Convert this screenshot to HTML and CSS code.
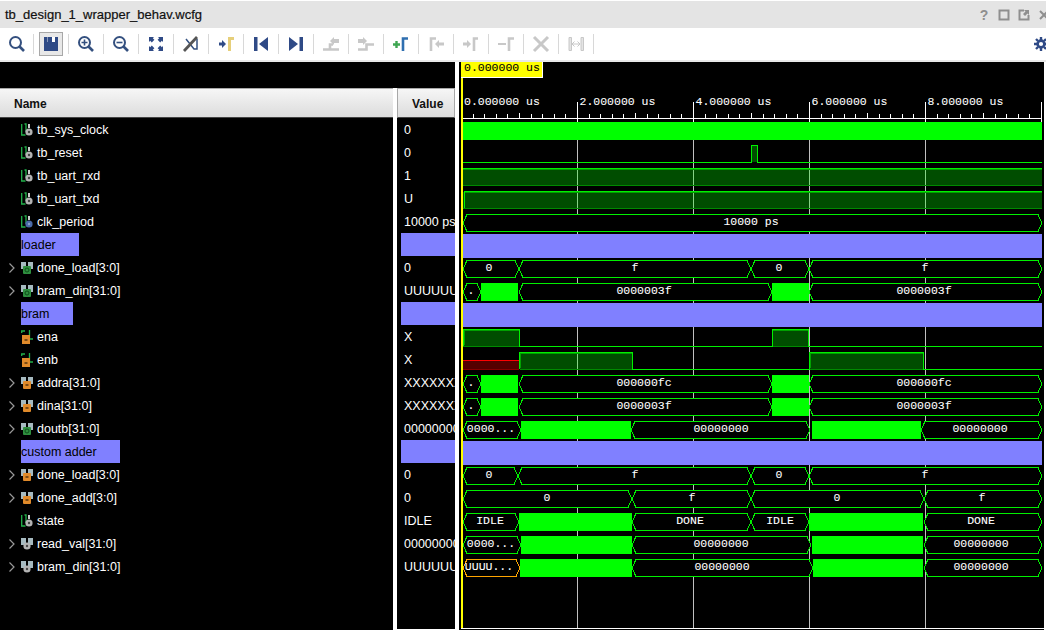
FILE: index.html
```html
<!DOCTYPE html>
<html>
<head>
  <title>tb_design_1_wrapper_behav.wcfg</title>
  <link rel="stylesheet" href="styles.css">
</head>
<body>
  <svg class="defs" width="0" height="0">
    <symbol id="sig-grey" viewBox="0 0 12 14">
      <path d="M0.7 1V12H4.5M3.5 1H5V9" fill="none" stroke="#22b04a" stroke-width="1.3"/>
      <path d="M8 1V5" stroke="#ccc" stroke-width="2"/>
      <circle cx="8" cy="9" r="3.6" fill="#b4b4b4"/>
      <circle cx="8" cy="9" r="1.2" fill="#444"/>
    </symbol>
    <symbol id="sig-blue" viewBox="0 0 12 14">
      <path d="M0.7 1V12H4.5M3.5 1H5V9" fill="none" stroke="#22b04a" stroke-width="1.3"/>
      <path d="M8 1V5" stroke="#ccc" stroke-width="2"/>
      <circle cx="8" cy="9" r="3.6" fill="#4a6aa8"/>
      <circle cx="8" cy="9" r="1.2" fill="#8aa0c8"/>
    </symbol>
    <symbol id="sig-orange" viewBox="0 0 12 14">
      <path d="M0.7 3V1H4" fill="none" stroke="#22b04a" stroke-width="1.3"/>
      <path d="M8.5 0V9H12" fill="none" stroke="#22b04a" stroke-width="1.3"/>
      <rect x="1" y="5" width="8" height="9" fill="#e08a2a"/>
      <rect x="3.5" y="9" width="3" height="2" fill="#7a4a14"/>
    </symbol>
    <symbol id="bus-green" viewBox="0 0 12 12">
      <path d="M0 0H5V5L3 7H0zM12 0H7V5L9 7H12z" fill="#a6bac0"/>
      <rect x="2" y="4" width="8" height="8" rx="1" fill="#2f8f3f"/>
      <circle cx="6" cy="8" r="2" fill="none" stroke="#0e4f1a"/>
    </symbol>
    <symbol id="bus-orange" viewBox="0 0 12 12">
      <path d="M0 0H5V5L3 7H0zM12 0H7V5L9 7H12z" fill="#a6bac0"/>
      <rect x="2" y="4" width="8" height="8" rx="1" fill="#e08a2a"/>
      <rect x="4.5" y="7" width="3" height="2" fill="#7a4a14"/>
    </symbol>
    <symbol id="bus-grey" viewBox="0 0 12 12">
      <path d="M0 0H5V5L3 7H0zM12 0H7V5L9 7H12z" fill="#a6bac0"/>
      <circle cx="6" cy="8" r="3.6" fill="#b4b4b4"/>
      <circle cx="6" cy="8" r="1.2" fill="#444"/>
    </symbol>
    <symbol id="chev" viewBox="0 0 6 10">
      <path d="M0.5 0.5L5 5L0.5 9.5" fill="none" stroke="#999" stroke-width="1.2"/>
    </symbol>
  </svg>

  <div class="titlebar">
    <span class="title">tb_design_1_wrapper_behav.wcfg</span>
    <div class="win-btns">
      <span class="help">?</span>
      <svg class="win-ico" viewBox="0 0 12 12"><rect x="1.5" y="1.5" width="9" height="9" fill="none" stroke="#8f8f8f" stroke-width="2"/></svg>
      <svg class="win-ico" viewBox="0 0 12 12"><path d="M6 1.5H1.5V10.5H10.5V6" fill="none" stroke="#8f8f8f" stroke-width="2"/><path d="M6 1H11V6L9.5 4.5L7 7L5 5L7.5 2.5z" fill="#8f8f8f"/></svg>
      <svg class="win-ico" viewBox="0 0 12 12"><path d="M2 2L10 10M10 2L2 10" stroke="#8f8f8f" stroke-width="2"/></svg>
    </div>
  </div>

  <div class="toolbar">
    <div class="tool first"><svg viewBox="0 0 20 20"><circle cx="8.5" cy="8.5" r="5.5" fill="none" stroke="#34507f" stroke-width="2"/><path d="M12.5 12.5L17 17" stroke="#34507f" stroke-width="2.6"/></svg></div>
    <div class="tool"><div class="pressed"><svg viewBox="0 0 20 20"><path d="M3 3H17V17H3z" fill="#2f4a86"/><rect x="11" y="3" width="3" height="5" fill="#fff"/><rect x="6" y="3" width="1" height="5" fill="#8898bb"/></svg></div></div>
    <div class="tool"><svg viewBox="0 0 20 20"><circle cx="8.5" cy="8.5" r="5.5" fill="none" stroke="#34507f" stroke-width="2"/><path d="M12.5 12.5L17 17" stroke="#34507f" stroke-width="2.6"/><path d="M8.5 5.5V11.5M5.5 8.5H11.5" stroke="#34507f" stroke-width="1.6"/></svg></div>
    <div class="tool"><svg viewBox="0 0 20 20"><circle cx="8.5" cy="8.5" r="5.5" fill="none" stroke="#34507f" stroke-width="2"/><path d="M12.5 12.5L17 17" stroke="#34507f" stroke-width="2.6"/><path d="M5.5 8.5H11.5" stroke="#34507f" stroke-width="1.6"/></svg></div>
    <div class="tool"><svg viewBox="0 0 20 20"><g fill="#2f4a86"><path d="M3 3H8L6.8 4.2L8.4 5.8L5.8 8.4L4.2 6.8L3 8z"/><path d="M17 3H12L13.2 4.2L11.6 5.8L14.2 8.4L15.8 6.8L17 8z"/><path d="M3 17H8L6.8 15.8L8.4 14.2L5.8 11.6L4.2 13.2L3 12z"/><path d="M17 17H12L13.2 15.8L11.6 14.2L14.2 11.6L15.8 13.2L17 12z"/></g></svg></div>
    <div class="tool"><svg viewBox="0 0 20 20"><path d="M5 5L13 15H16L16 5" fill="none" stroke="#34507f" stroke-width="1.5"/><path d="M3 17L16 3" stroke="#555" stroke-width="2.8"/></svg></div>
    <div class="tool"><svg viewBox="0 0 20 20"><path d="M3 8.5H6V6L10 10L6 14V11.5H3z" fill="#2f4a86"/><path d="M13.5 17V4.5H18" fill="none" stroke="#e6cf7a" stroke-width="3"/></svg></div>
    <div class="tool"><svg viewBox="0 0 20 20"><rect x="3" y="3" width="3.5" height="14" fill="#2f4a86"/><path d="M17 3V17L8 10z" fill="#2f4a86"/></svg></div>
    <div class="tool"><svg viewBox="0 0 20 20"><path d="M3 3V17L12 10z" fill="#2f4a86"/><rect x="13.5" y="3" width="3.5" height="14" fill="#2f4a86"/></svg></div>
    <div class="tool"><svg viewBox="0 0 20 20"><path d="M2 15.5H18M9 15.5V10.5H12" fill="none" stroke="#c8c8c8" stroke-width="2.6"/><path d="M9 7L13 3V5H18V9H13V11z" fill="#c8c8c8"/></svg></div>
    <div class="tool"><svg viewBox="0 0 20 20"><path d="M2 15.5H10.5V10.5H18" fill="none" stroke="#c8c8c8" stroke-width="2.6"/><path d="M2 5H7V3L11 7L7 11V9H2z" fill="#c8c8c8"/></svg></div>
    <div class="tool"><svg viewBox="0 0 20 20"><path d="M2 10.5H9M5.5 7V14" stroke="#3fa652" stroke-width="2.4"/><path d="M12 17V4.5H17" fill="none" stroke="#2f6fb0" stroke-width="2.6"/></svg></div>
    <div class="tool"><svg viewBox="0 0 20 20"><path d="M5 17V4.5H10" fill="none" stroke="#c8c8c8" stroke-width="2.6"/><path d="M18 8.5H13V6L9 10L13 14V11.5H18z" fill="#c8c8c8"/></svg></div>
    <div class="tool"><svg viewBox="0 0 20 20"><path d="M2 8.5H6V6L10 10L6 14V11.5H2z" fill="#c8c8c8"/><path d="M13 17V4.5H17" fill="none" stroke="#c8c8c8" stroke-width="2.6"/></svg></div>
    <div class="tool"><svg viewBox="0 0 20 20"><path d="M2 10H10" stroke="#c8c8c8" stroke-width="2"/><path d="M13 17V4.5H18" fill="none" stroke="#c8c8c8" stroke-width="2.6"/></svg></div>
    <div class="tool"><svg viewBox="0 0 20 20"><path d="M3 3L17 17M17 3L3 17" stroke="#c8c8c8" stroke-width="3"/></svg></div>
    <div class="tool"><svg viewBox="0 0 20 20"><path d="M3 3.5H5.5V16.5H3zM15 3.5H17.5V16.5H15z" fill="#e4e4e4" stroke="#c8c8c8"/><path d="M6 10H14M6 10L8.5 7.5M6 10L8.5 12.5M14 10L11.5 7.5M14 10L11.5 12.5" fill="none" stroke="#c8c8c8"/></svg></div>
    <div class="gear"><svg viewBox="0 0 14 14"><circle cx="7" cy="7" r="3.4" fill="none" stroke="#2f4a86" stroke-width="2.6"/><path d="M7 0V3M7 11V14M0 7H3M11 7H14M2 2L4 4M10 10L12 12M12 2L10 4M4 10L2 12" stroke="#2f4a86" stroke-width="2.4"/></svg></div>
  </div>

  <div class="panels">
    <div class="left">
      <div class="top-strip"></div>
      <div class="columns">
        <div class="names">
          <div class="head head-name">Name</div>
          <div class="row"><span class="twist"></span><svg class="ico"><use href="#sig-grey"/></svg><span>tb_sys_clock</span></div>
          <div class="row"><span class="twist"></span><svg class="ico"><use href="#sig-grey"/></svg><span>tb_reset</span></div>
          <div class="row"><span class="twist"></span><svg class="ico"><use href="#sig-grey"/></svg><span>tb_uart_rxd</span></div>
          <div class="row"><span class="twist"></span><svg class="ico"><use href="#sig-grey"/></svg><span>tb_uart_txd</span></div>
          <div class="row"><span class="twist"></span><svg class="ico"><use href="#sig-blue"/></svg><span>clk_period</span></div>
          <div class="row"><span class="twist"></span><span class="divider w-loader">loader</span></div>
          <div class="row"><span class="twist"><svg class="chev"><use href="#chev"/></svg></span><svg class="ico"><use href="#bus-green"/></svg><span>done_load[3:0]</span></div>
          <div class="row"><span class="twist"><svg class="chev"><use href="#chev"/></svg></span><svg class="ico"><use href="#bus-green"/></svg><span>bram_din[31:0]</span></div>
          <div class="row"><span class="twist"></span><span class="divider w-bram">bram</span></div>
          <div class="row"><span class="twist"></span><svg class="ico"><use href="#sig-orange"/></svg><span>ena</span></div>
          <div class="row"><span class="twist"></span><svg class="ico"><use href="#sig-orange"/></svg><span>enb</span></div>
          <div class="row"><span class="twist"><svg class="chev"><use href="#chev"/></svg></span><svg class="ico"><use href="#bus-orange"/></svg><span>addra[31:0]</span></div>
          <div class="row"><span class="twist"><svg class="chev"><use href="#chev"/></svg></span><svg class="ico"><use href="#bus-orange"/></svg><span>dina[31:0]</span></div>
          <div class="row"><span class="twist"><svg class="chev"><use href="#chev"/></svg></span><svg class="ico"><use href="#bus-green"/></svg><span>doutb[31:0]</span></div>
          <div class="row"><span class="twist"></span><span class="divider w-adder">custom adder</span></div>
          <div class="row"><span class="twist"><svg class="chev"><use href="#chev"/></svg></span><svg class="ico"><use href="#bus-orange"/></svg><span>done_load[3:0]</span></div>
          <div class="row"><span class="twist"><svg class="chev"><use href="#chev"/></svg></span><svg class="ico"><use href="#bus-orange"/></svg><span>done_add[3:0]</span></div>
          <div class="row"><span class="twist"></span><svg class="ico"><use href="#sig-grey"/></svg><span>state</span></div>
          <div class="row"><span class="twist"><svg class="chev"><use href="#chev"/></svg></span><svg class="ico"><use href="#bus-grey"/></svg><span>read_val[31:0]</span></div>
          <div class="row"><span class="twist"><svg class="chev"><use href="#chev"/></svg></span><svg class="ico"><use href="#bus-grey"/></svg><span>bram_din[31:0]</span></div>
        </div>
        <div class="values">
          <div class="head head-value">Value</div>
          <div class="val">0</div>
          <div class="val">0</div>
          <div class="val">1</div>
          <div class="val">U</div>
          <div class="val">10000 ps</div>
          <div class="val val-group"></div>
          <div class="val">0</div>
          <div class="val">UUUUUU</div>
          <div class="val val-group"></div>
          <div class="val">X</div>
          <div class="val">X</div>
          <div class="val">XXXXXXX</div>
          <div class="val">XXXXXXX</div>
          <div class="val">00000000</div>
          <div class="val val-group"></div>
          <div class="val">0</div>
          <div class="val">0</div>
          <div class="val">IDLE</div>
          <div class="val">00000000</div>
          <div class="val">UUUUUU</div>
        </div>
      </div>
    </div>

    <svg class="wave" width="587" height="568" viewBox="459 62 587 568">
      <defs>
        <path id="decade" d="M12.5 114V118M23.5 114V118M35.5 114V118M46.5 114V118M58.5 113V118M70.5 114V118M81.5 114V118M93.5 114V118M104.5 114V118"/>
      </defs>
      <g class="crisp">
        <!-- ruler -->
        <g class="ruler-lines">
          <use href="#decade" x="461"/>
          <use href="#decade" x="577"/>
          <use href="#decade" x="693"/>
          <use href="#decade" x="809"/>
          <use href="#decade" x="925"/>
          <path d="M463 118.5H1042M577.5 102V122M693.5 102V122M809.5 102V122M925.5 102V122M1041.5 102V122"/>
        </g>
        <path class="grid" d="M577.5 122V628M693.5 122V628M809.5 122V628M925.5 122V628"/>

        <!-- group dividers -->
        <rect class="group" x="463" y="234" width="579" height="24"/>
        <rect class="group" x="463" y="303" width="579" height="24"/>
        <rect class="group" x="463" y="441" width="579" height="24"/>

        <!-- single bit signals -->
        <rect class="solid" x="463" y="122" width="579" height="18"/>
        <path class="line" d="M463 162.5H751.5V145.5H757.5V162.5H1042"/>
        <rect class="soft" x="752" y="146" width="5" height="16"/>
        <rect class="soft" x="463" y="169" width="579" height="16"/>
        <path class="edge" d="M463 169.5H1042"/>
        <path class="line" d="M463 168.5H1042"/>
        <path class="low" d="M463 185.5H1042"/>
        <rect class="soft" x="463" y="192" width="579" height="16"/>
        <path class="edge" d="M465 192.5H1042"/>
        <path class="line" d="M464.5 208V191.5H1042"/>
        <path class="low" d="M463 208.5H1042"/>

        <rect class="soft" x="463" y="330" width="56" height="16"/>
        <rect class="soft" x="772" y="330" width="37" height="16"/>
        <path class="edge" d="M464 345V330.5H519M772 330.5H808"/>
        <path class="low" d="M463 346.5H519M772 346.5H809"/>
        <path class="line" d="M463.5 346V329.5H519.5V346.5H772.5V329.5H808.5V346.5H1042"/>

        <rect class="red-fill" x="463" y="361" width="56" height="8"/>
        <path class="red-top" d="M463 360.5H519"/>
        <path class="red-low" d="M463 369.5H519"/>
        <rect class="soft" x="520" y="353" width="112" height="16"/>
        <rect class="soft" x="810" y="353" width="113" height="16"/>
        <path class="edge" d="M520.5 368V353.5H632M810.5 368V353.5H923"/>
        <path class="low" d="M520 369.5H632M810 369.5H923"/>
        <path class="line" d="M519.5 369V352.5H632.5V369.5H809.5V352.5H923.5V369.5H1042"/>

        <!-- buses -->
        <g class="bus">
          <path d="M463 223l4-8.5H1038l4 8.5l-4 8.5H467Z"/>
          <path d="M463 269l4-8.5H515l4 8.5l-4 8.5H467Z M519 269l4-8.5H747l4 8.5l-4 8.5H523Z M751 269l4-8.5H805l4 8.5l-4 8.5H755Z M809 269l4-8.5H1038l4 8.5l-4 8.5H813Z"/>
          <path d="M463 292l4-8.5H477l4 8.5l-4 8.5H467Z M519 292l4-8.5H768l4 8.5l-4 8.5H523Z M809 292l4-8.5H1038l4 8.5l-4 8.5H813Z"/>
          <path d="M463 384l4-8.5H477l4 8.5l-4 8.5H467Z M519 384l4-8.5H768l4 8.5l-4 8.5H523Z M809 384l4-8.5H1038l4 8.5l-4 8.5H813Z"/>
          <path d="M463 407l4-8.5H477l4 8.5l-4 8.5H467Z M519 407l4-8.5H768l4 8.5l-4 8.5H523Z M809 407l4-8.5H1038l4 8.5l-4 8.5H813Z"/>
          <path d="M463 430l4-8.5H517l4 8.5l-4 8.5H467Z M631 430l4-8.5H806l4 8.5l-4 8.5H635Z M921 430l4-8.5H1038l4 8.5l-4 8.5H925Z"/>
          <path d="M463 476l4-8.5H514l4 8.5l-4 8.5H467Z M518 476l4-8.5H747l4 8.5l-4 8.5H522Z M751 476l4-8.5H805l4 8.5l-4 8.5H755Z M809 476l4-8.5H1038l4 8.5l-4 8.5H813Z"/>
          <path d="M463 499l4-8.5H628l4 8.5l-4 8.5H467Z M632 499l4-8.5H747l4 8.5l-4 8.5H636Z M751 499l4-8.5H920l4 8.5l-4 8.5H755Z M924 499l4-8.5H1038l4 8.5l-4 8.5H928Z"/>
          <path d="M463 522l4-8.5H515l4 8.5l-4 8.5H467Z M632 522l4-8.5H747l4 8.5l-4 8.5H636Z M751 522l4-8.5H805l4 8.5l-4 8.5H755Z M924 522l4-8.5H1038l4 8.5l-4 8.5H928Z"/>
          <path d="M463 545l4-8.5H517l4 8.5l-4 8.5H467Z M632 545l4-8.5H807l4 8.5l-4 8.5H636Z M924 545l4-8.5H1038l4 8.5l-4 8.5H928Z"/>
          <path d="M632 568l4-8.5H809l4 8.5l-4 8.5H636Z M924 568l4-8.5H1038l4 8.5l-4 8.5H928Z"/>
          <path class="bus-u" d="M463 568l4-8.5H516l4 8.5l-4 8.5H467Z"/>
        </g>
        <g class="solid">
          <rect x="481" y="283" width="37" height="18"/>
          <rect x="772" y="283" width="37" height="18"/>
          <rect x="481" y="375" width="37" height="18"/>
          <rect x="772" y="375" width="37" height="18"/>
          <rect x="481" y="398" width="37" height="18"/>
          <rect x="772" y="398" width="37" height="18"/>
          <rect x="521" y="421" width="110" height="18"/>
          <rect x="812" y="421" width="109" height="18"/>
          <rect x="519" y="513" width="113" height="18"/>
          <rect x="809" y="513" width="114" height="18"/>
          <rect x="521" y="536" width="111" height="18"/>
          <rect x="812" y="536" width="111" height="18"/>
          <rect x="520" y="559" width="112" height="18"/>
          <rect x="813" y="559" width="110" height="18"/>
        </g>

        <!-- frame and cursor -->
        <path class="frame" d="M461 628.5H1044"/>
        <rect class="cursor" x="461" y="62" width="2" height="566"/>
        <rect class="cursor" x="461" y="62" width="81" height="15"/>
        <path class="frame" d="M461 77.5H543M542.5 62V78"/>
        <rect class="frame-fill" x="1044" y="62" width="2" height="568"/>
      </g>

      <text class="cursor-time" x="464" y="71">0.000000 us</text>
      <g class="ruler-text">
        <text x="464" y="105">0.000000 us</text>
        <text x="579.5" y="105">2.000000 us</text>
        <text x="695.5" y="105">4.000000 us</text>
        <text x="811.5" y="105">6.000000 us</text>
        <text x="927.5" y="105">8.000000 us</text>
      </g>
      <g class="bus-text">
        <text x="751" y="225">10000 ps</text>
        <text x="489" y="271">0</text><text x="635" y="271">f</text><text x="779" y="271">0</text><text x="925" y="271">f</text>
        <text x="471" y="294">.</text><text x="644" y="294">0000003f</text><text x="924" y="294">0000003f</text>
        <text x="471" y="386">.</text><text x="644" y="386">000000fc</text><text x="924" y="386">000000fc</text>
        <text x="471" y="409">.</text><text x="644" y="409">0000003f</text><text x="924" y="409">0000003f</text>
        <text x="491" y="432">0000...</text><text x="721" y="432">00000000</text><text x="980" y="432">00000000</text>
        <text x="489" y="478">0</text><text x="635" y="478">f</text><text x="779" y="478">0</text><text x="925" y="478">f</text>
        <text x="547" y="501">0</text><text x="692" y="501">f</text><text x="837" y="501">0</text><text x="982" y="501">f</text>
        <text x="490" y="524">IDLE</text><text x="690" y="524">DONE</text><text x="780" y="524">IDLE</text><text x="981" y="524">DONE</text>
        <text x="491" y="547">0000...</text><text x="721" y="547">00000000</text><text x="981" y="547">00000000</text>
        <text x="489" y="570">UUUU...</text><text x="722" y="570">00000000</text><text x="981" y="570">00000000</text>
      </g>
    </svg>
  </div>
</body>
</html>
```

FILE: styles.css
```css
body {
  margin: 0;
  width: 1046px;
  height: 630px;
  overflow: hidden;
  background-color: #fff;
  font-family: "Liberation Sans", Arial, sans-serif;
}

.defs {
  position: absolute;
}

.titlebar {
  display: flex;
  align-items: center;
  height: 27px;
  margin-top: 1px;
  padding-left: 5px;
  background-color: #e4e4e4;
  overflow: hidden;
}

.title {
  font-size: 13px;
  color: #111;
  -webkit-text-stroke: 0.2px #111;
}

.win-btns {
  display: flex;
  align-items: center;
  gap: 8px;
  margin-left: auto;
  margin-right: -4px;
}

.help {
  width: 12px;
  font-size: 14px;
  font-weight: bold;
  text-align: center;
  color: #8f8f8f;
}

.win-ico {
  width: 12px;
  height: 12px;
}

.toolbar {
  display: flex;
  align-items: center;
  height: 32px;
  background-color: #fff;
  border-bottom: 2px solid #e8e8e8;
  overflow: hidden;
}

.tool {
  display: flex;
  align-items: center;
  justify-content: center;
  box-sizing: border-box;
  width: 35px;
  height: 20px;
  border-right: 1px solid #d8d8d8;
}

.tool.first {
  width: 34px;
}

.tool svg {
  width: 20px;
  height: 20px;
  flex: none;
}

.pressed {
  display: flex;
  align-items: center;
  justify-content: center;
  box-sizing: border-box;
  flex: none;
  width: 24px;
  height: 24px;
  background-color: #e8e8e8;
  border: 1px solid #a8a8a8;
}

.gear {
  margin-left: auto;
  margin-right: -2px;
  height: 14px;
}

.gear svg {
  width: 14px;
  height: 14px;
}

.panels {
  display: flex;
  gap: 4px;
  height: 568px;
}

.left {
  width: 455px;
  display: flex;
  flex-direction: column;
}

.top-strip {
  height: 26px;
  background-color: #000;
}

.columns {
  flex: 1;
  display: flex;
  gap: 4px;
}

.names {
  width: 393px;
  background-color: #000;
}

.values {
  width: 58px;
  height: 541px;
  overflow: hidden;
  background-color: #000;
  border-bottom: 1px solid #fff;
}

.head {
  box-sizing: border-box;
  height: 30px;
  line-height: 30px;
  font-size: 12px;
  font-weight: bold;
  color: #111;
  background: linear-gradient(#f6f6f6, #dcdcdc);
  border-top: 1px solid #a8a8a8;
  border-bottom: 1px solid #444;
}

.head-name {
  padding-left: 14px;
}

.head-value {
  padding-left: 14px;
  border-left: 1px solid #a8a8a8;
  border-right: 1px solid #a8a8a8;
}

.row {
  display: flex;
  align-items: center;
  height: 23px;
  font-size: 12.5px;
  color: #fff;
  white-space: nowrap;
}

.twist {
  display: flex;
  align-items: center;
  width: 21px;
  padding-left: 9px;
  box-sizing: border-box;
}

.chev {
  width: 6px;
  height: 10px;
}

.ico {
  width: 12px;
  height: 14px;
  margin-right: 4px;
}

.divider {
  height: 23px;
  line-height: 25px;
  box-sizing: border-box;
  color: #000;
  background-color: #8080ff;
}

.w-loader {
  width: 58px;
}

.w-bram {
  width: 52px;
}

.w-adder {
  width: 99px;
}

.val {
  height: 23px;
  line-height: 25px;
  padding-left: 7px;
  font-size: 12.5px;
  color: #fff;
  white-space: nowrap;
}

.val-group {
  margin-left: 4px;
  background-color: #8080ff;
}

.wave {
  display: block;
  background-color: #000;
}

.crisp {
  shape-rendering: crispEdges;
}

.ruler-lines {
  fill: none;
  stroke: #fff;
}

.grid {
  fill: none;
  stroke: #c0c0c0;
}

.group {
  fill: #8080ff;
}

.solid {
  fill: #00ff00;
}

.soft {
  fill: #00ff00;
  fill-opacity: 0.3;
}

.line {
  fill: none;
  stroke: #00f000;
}

.edge {
  fill: none;
  stroke: #00a000;
}

.low {
  fill: none;
  stroke: #008a00;
}

.red-fill {
  fill: #550000;
}

.red-top {
  stroke: #ff0000;
}

.red-low {
  stroke: #880000;
}

.bus path {
  fill: #000;
  stroke: #00f000;
}

.bus .bus-u {
  stroke: #ffa500;
}

.frame {
  fill: none;
  stroke: #fff;
}

.frame-fill {
  fill: #fff;
}

.cursor {
  fill: #ffff00;
}

.cursor-time,
.ruler-text text,
.bus-text text {
  font-family: "Liberation Mono", "Courier New", monospace;
  font-size: 11.5px;
  stroke-width: 0.08px;
}

.cursor-time {
  fill: #000;
  stroke: #000;
}

.ruler-text text {
  fill: #fff;
  stroke: #fff;
}

.bus-text text {
  fill: #fff;
  stroke: #fff;
  text-anchor: middle;
}
```
